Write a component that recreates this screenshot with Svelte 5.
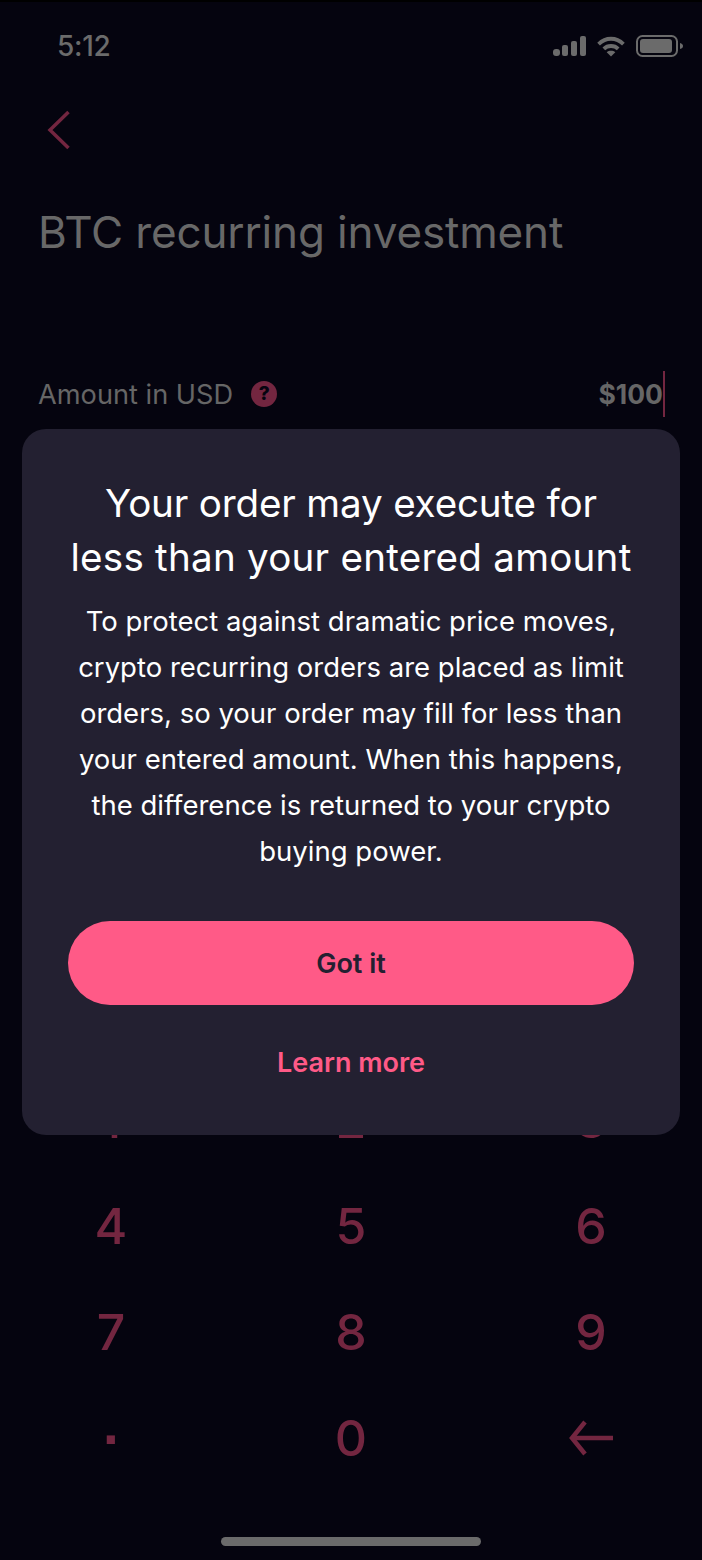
<script>
  const keys = ["1", "2", "3", "4", "5", "6", "7", "8", "9"];
  const body = [
    "To protect against dramatic price moves,",
    "crypto recurring orders are placed as limit",
    "orders, so your order may fill for less than",
    "your entered amount. When this happens,",
    "the difference is returned to your crypto",
    "buying power."
  ];
</script>

<div class="screen">
  <div class="status">
    <span class="time">5:12</span>
    <div class="status-icons">
      <svg width="33" height="20" viewBox="0 0 33 20" fill="#6b6b6b">
        <rect x="0" y="13" width="7" height="7" rx="3" />
        <rect x="9" y="9" width="6" height="11" rx="2" />
        <rect x="18" y="5" width="6" height="15" rx="2" />
        <rect x="27" y="0" width="6" height="20" rx="2" />
      </svg>
      <svg width="30" height="21" viewBox="0 0 30 22" fill="none" stroke="#6b6b6b" stroke-width="4">
        <path d="M2 8.500C9.500 1 20.500 1 28 8.500" />
        <path d="M7.500 13.500C11.500 9.500 18.500 9.500 22.500 13.500" />
        <path d="M15 21.500L10.500 17C13 15 17 15 19.500 17Z" fill="#6b6b6b" stroke="none" />
      </svg>
      <svg width="47" height="22" viewBox="0 0 47 22">
        <rect x="1" y="1" width="40" height="20" rx="5.500" fill="none" stroke="#6b6b6b" stroke-width="2" />
        <rect x="4" y="4" width="32" height="14" rx="3" fill="#6b6b6b" />
        <path d="M44 8C46 8.500 47 9.500 47 11C47 12.500 46 13.500 44 14Z" fill="#6b6b6b" />
      </svg>
    </div>
  </div>

  <div class="nav">
    <svg width="24" height="40" viewBox="0 0 24 40" fill="none" stroke="#732640" stroke-width="3.500">
      <path d="M21.500 2L3 20L21.500 38" />
    </svg>
  </div>

  <h1>BTC recurring investment</h1>

  <div class="amount">
    <div class="amount-label">
      <span>Amount in USD</span>
      <span class="help">?</span>
    </div>
    <div class="amount-value"><b>$100</b><i class="caret"></i></div>
  </div>

  <div class="keypad">
    {#each keys as key}
      <div class="key">{key}</div>
    {/each}
    <div class="key dot">·</div>
    <div class="key">0</div>
    <div class="key">
      <svg width="44" height="36" viewBox="0 0 44 36" fill="none" stroke="#732640" stroke-width="4.500">
        <path d="M44 18H3" />
        <path d="M16 2L3 18L16 34" />
      </svg>
    </div>
  </div>

  <div class="home"></div>

  <div class="modal">
    <h2>
      <span class="first">Your order may execute for</span>
      <span class="second">less than your entered amount</span>
    </h2>
    <p>
      {#each body as line}
        <span>{line}</span>
      {/each}
    </p>
    <button class="primary">Got it</button>
    <button class="link">Learn more</button>
  </div>
</div>

<style>
  :global(body) {
    margin: 0;
    background: #05040f;
  }

  .screen {
    position: relative;
    width: 702px;
    height: 1560px;
    overflow: hidden;
    background: #05040f;
    border-top: 2px solid #000;
    box-sizing: border-box;
    font-family: Inter, "Noto Sans", sans-serif;
  }

  .status {
    display: flex;
    justify-content: space-between;
    align-items: center;
    height: 44px;
    margin-top: 22px;
    padding: 0 19px 0 57px;
    color: #6b6b6b;
  }

  .time {
    font-size: 28px;
    font-weight: 500;
    letter-spacing: -0.3px;
  }

  .status-icons {
    display: flex;
    align-items: center;
    gap: 10px;
  }

  .nav {
    height: 40px;
    margin-top: 42px;
    padding-left: 47px;
  }

  h1 {
    margin: 54px 0 0;
    padding-left: 38px;
    font-size: 44px;
    line-height: 56px;
    font-weight: 400;
    letter-spacing: -0.15px;
    color: #686868;
  }

  .amount {
    display: flex;
    justify-content: space-between;
    align-items: center;
    margin-top: 111px;
    padding: 0 37px 0 38px;
    height: 46px;
    font-size: 27.200px;
    color: #666;
  }

  .amount-label {
    display: flex;
    align-items: center;
    gap: 18px;
  }

  .help {
    width: 26px;
    height: 26px;
    border-radius: 50%;
    background: #732640;
    color: #05040f;
    font-size: 19px;
    font-weight: 800;
    text-align: center;
    line-height: 26px;
  }

  .amount-value {
    display: flex;
    align-items: center;
  }

  .amount-value b {
    font-weight: 700;
    font-size: 26.500px;
  }

  .caret {
    width: 2px;
    height: 46px;
    background: #732640;
  }

  .keypad {
    display: grid;
    grid-template-columns: repeat(3, 160px);
    justify-content: space-between;
    grid-auto-rows: 106px;
    margin-top: 650px;
    padding: 0 31px;
    color: #732640;
    font-size: 50px;
    font-weight: 550;
  }

  .key {
    display: flex;
    align-items: center;
    justify-content: center;
  }

  .dot {
    padding-left: 3px;
    font-family: "Liberation Sans", sans-serif;
    font-weight: 700;
    font-size: 58px;
  }

  .home {
    position: absolute;
    left: 221px;
    bottom: 14px;
    width: 260px;
    height: 9px;
    border-radius: 5px;
    background: #6b6b6b;
  }

  .modal {
    position: absolute;
    left: 22px;
    top: 427px;
    width: 658px;
    height: 706px;
    box-sizing: border-box;
    padding: 47px 46px 0;
    display: flex;
    flex-direction: column;
    align-items: center;
    border-radius: 24px;
    background: #232031;
    color: #fff;
    text-align: center;
  }

  h2 {
    margin: 0;
    font-size: 38.600px;
    line-height: 54px;
    font-weight: 400;
    white-space: nowrap;
  }

  h2 span {
    display: block;
  }

  /* per line tracking, the original font has other word widths */
  .first {
    letter-spacing: -0.16px;
  }

  .second {
    letter-spacing: 0.24px;
  }

  p {
    margin: 14px 0 0;
    font-size: 27.500px;
    line-height: 46px;
    white-space: nowrap;
  }

  p span {
    display: block;
  }

  button {
    border: 0;
    font-family: inherit;
    font-size: 27px;
    font-weight: 600;
  }

  .primary {
    flex: none;
    width: 566px;
    height: 84px;
    margin-top: 47px;
    border-radius: 42px;
    background: #ff5a87;
    color: #232031;
  }

  .link {
    margin-top: 38px;
    padding: 0;
    background: none;
    color: #ff5a87;
    line-height: 40px;
  }
</style>
